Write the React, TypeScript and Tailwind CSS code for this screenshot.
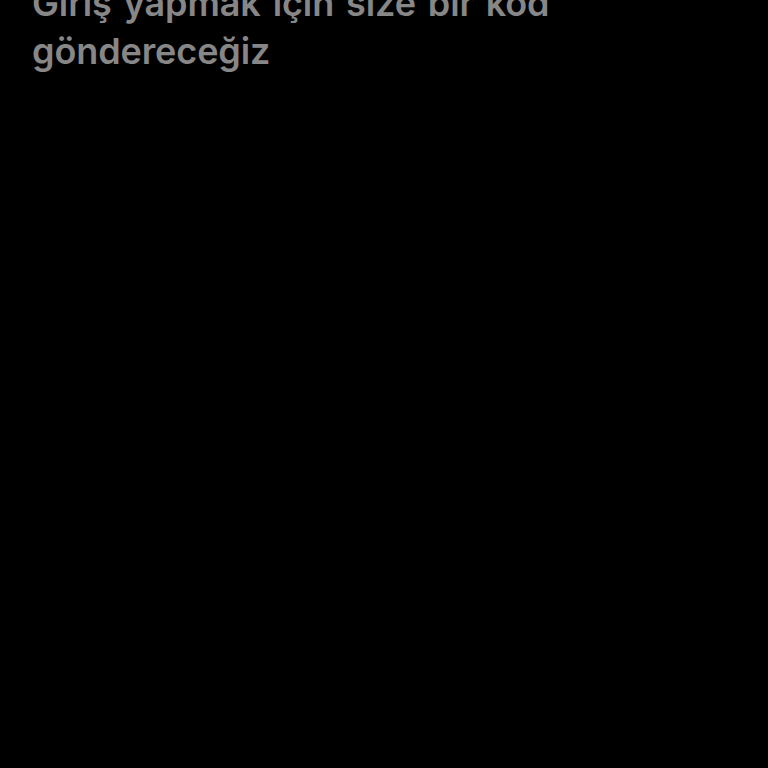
export default function App() {
  return (
    <div className="h-[768px] w-[768px] overflow-hidden bg-black">
      <div className="-mt-[21px] px-8">
        <h1
          className="text-[36px] font-semibold leading-[48px] tracking-[-0.1px] text-[#878787] [word-spacing:3px]"
          style={{ fontFamily: 'Inter, "Noto Sans", sans-serif' }}
        >
          Giriş yapmak için size bir kod göndereceğiz
        </h1>
      </div>
    </div>
  )
}
